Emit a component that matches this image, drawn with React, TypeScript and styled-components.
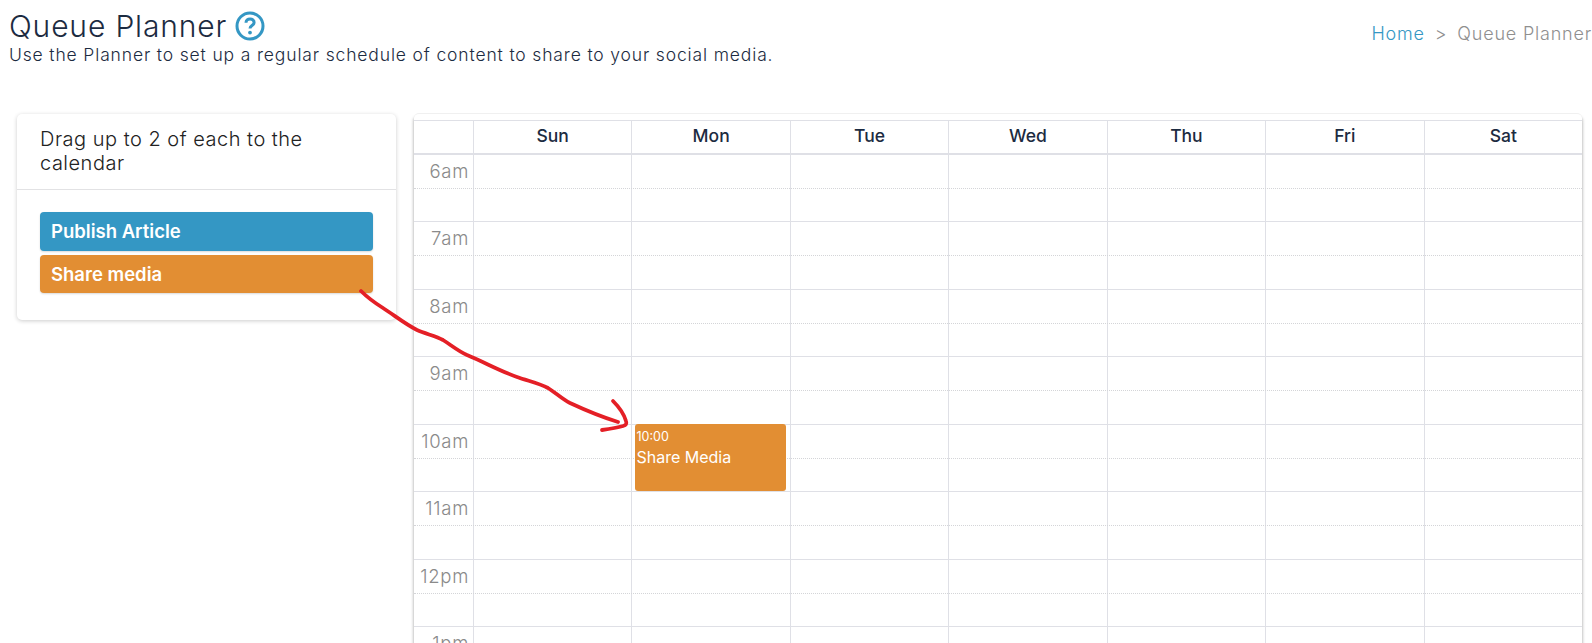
import React from "react";
import styled, { createGlobalStyle } from "styled-components";

const GlobalStyle = createGlobalStyle`
	html, body {
		margin: 0;
		height: 100%;
		background: #fff;
		overflow: hidden;
	}
	body {
		font-family: Inter, "Open Sans", sans-serif;
		color: #1c2b41;
	}
`;

const Page = styled.div`
	position: relative;
	width: 1592px;
	height: 643px;
	overflow: hidden;
`;

const Header = styled.header`
	display: flex;
	justify-content: space-between;
	align-items: flex-start;
	height: 113px;
	padding: 10px 0 0 9px;
	box-sizing: border-box;
`;

const TitleRow = styled.div`
	display: flex;
	align-items: center;
	gap: 8px;
	height: 32px;
`;

const Title = styled.h1`
	margin: 0;
	font-size: 30px;
	font-weight: 300;
	line-height: 32px;
	letter-spacing: 0.85px;
	color: #1c2b41;
`;

const Subtitle = styled.p`
	margin: 1px 0 0;
	font-size: 17.5px;
	font-weight: 300;
	line-height: 24px;
	letter-spacing: 0.85px;
	color: #1c2b41;
`;

const Breadcrumb = styled.nav`
	display: flex;
	gap: 10px;
	margin-top: 12px;
	font-size: 18px;
	font-weight: 300;
	line-height: 24px;
	letter-spacing: 0.8px;
	white-space: nowrap;
	color: #8f8f8f;
`;

const Crumb = styled.a`
	color: #3497c4;
`;

const Main = styled.div`
	display: flex;
	align-items: flex-start;
	gap: 18px;
	padding-left: 17px;
`;

const SideCard = styled.aside`
	width: 379px;
	box-sizing: border-box;
	background: #fff;
	border-radius: 5px;
	box-shadow: 0 1px 4px rgba(0, 0, 0, 0.2);
	margin-top: 1px;
`;

const SideHeading = styled.div`
	height: 76px;
	box-sizing: border-box;
	padding: 13px 60px 0 23px;
	border-bottom: 1px solid #e2e2e4;
	font-size: 20px;
	font-weight: 300;
	line-height: 24.4px;
	letter-spacing: 0.5px;
	color: #222;
`;

const SideBody = styled.div`
	display: flex;
	flex-direction: column;
	gap: 4px;
	padding: 22px 23px 27px;
`;

const DragItem = styled.div<{ $color: string }>`
	height: 38.5px;
	box-sizing: border-box;
	padding: 0 11px;
	display: flex;
	align-items: center;
	background: ${(p) => p.$color};
	border-radius: 4px;
	box-shadow: 0 1px 2px rgba(0, 0, 0, 0.15);
	color: #fff;
	font-size: 18.5px;
	font-weight: 600;
`;

const Calendar = styled.section`
	width: 1168px;
	height: 600px;
	box-sizing: border-box;
	padding-top: 6px;
	border-radius: 5px 5px 0 0;
	border-top: 1px solid #f0f0f0;
	box-shadow: -1px 3px 3px rgba(0, 0, 0, 0.2), 1px 3px 3px rgba(0, 0, 0, 0.2);
	overflow: hidden;
	background: #fff;
`;

const columns = "59px repeat(7, 1fr)";

const WeekHeader = styled.div`
	display: grid;
	grid-template-columns: ${columns};
	height: 34.5px;
	box-sizing: border-box;
	border-top: 1px solid #dfe0e6;
	border-bottom: 2px solid #dfe0e6;
`;

const DayName = styled.div`
	display: flex;
	align-items: center;
	justify-content: center;
	padding-bottom: 2px;
	border-left: 1px solid #dfe0e6;
	font-size: 17.5px;
	font-weight: 500;
	color: #1c2b41;
`;

const Corner = styled.div``;

const HourRow = styled.div`
	position: relative;
	display: grid;
	grid-template-columns: ${columns};
	height: 67.5px;
	box-sizing: border-box;
	border-bottom: 1px solid #dfe0e6;

	&::after {
		content: "";
		position: absolute;
		left: 0;
		right: 0;
		top: 33.4px;
		border-top: 1px dotted #d4d5d8;
	}
`;

const TimeLabel = styled.div`
	padding: 5px 4px 0 0;
	text-align: right;
	font-size: 18.5px;
	font-weight: 300;
	line-height: 22px;
	letter-spacing: 0.7px;
	color: #8a8a8a;
`;

const DayCell = styled.div`
	position: relative;
	border-left: 1px solid #dfe0e6;
`;

const EventCard = styled.div`
	position: absolute;
	z-index: 1;
	left: 3px;
	right: 4px;
	top: -0.5px;
	height: 67px;
	padding: 4px 1px;
	box-sizing: border-box;
	background: #e28e33;
	border-radius: 3px;
	color: #fff;
`;

const EventTime = styled.div`
	font-size: 12.5px;
	line-height: 18px;
`;

const EventTitle = styled.div`
	font-size: 16px;
	line-height: 23px;
`;

const ArrowOverlay = styled.svg`
	position: absolute;
	z-index: 2;
	inset: 0;
	pointer-events: none;
`;

const days = ["Sun", "Mon", "Tue", "Wed", "Thu", "Fri", "Sat"];
const hours = ["6am", "7am", "8am", "9am", "10am", "11am", "12pm", "1pm"];

const HelpIcon: React.FC = () => (
	<svg width="30" height="30" viewBox="0 0 30 30" fill="none">
		<circle cx="15" cy="15" r="13" stroke="#3497c4" strokeWidth="3" />
		<path
			d="M11 11.8c0-2.4 1.8-3.9 4.1-3.9s4 1.4 4 3.5c0 3.1-4.1 3-4.1 6"
			stroke="#3497c4"
			strokeWidth="3"
		/>
		<circle cx="15" cy="21.6" r="1.9" fill="#3497c4" />
	</svg>
);

const App: React.FC = () => {
	return (
		<Page>
			<GlobalStyle />
			<Header>
				<div>
					<TitleRow>
						<Title>Queue Planner</Title>
						<HelpIcon />
					</TitleRow>
					<Subtitle>
						Use the Planner to set up a regular schedule of content to share to
						your social media.
					</Subtitle>
				</div>
				<Breadcrumb>
					<Crumb>Home</Crumb>
					<span>&gt;</span>
					<span>Queue Planner</span>
				</Breadcrumb>
			</Header>
			<Main>
				<SideCard>
					<SideHeading>Drag up to 2 of each to the calendar</SideHeading>
					<SideBody>
						<DragItem $color="#3497c4">Publish Article</DragItem>
						<DragItem $color="#e28e33">Share media</DragItem>
					</SideBody>
				</SideCard>
				<Calendar>
					<WeekHeader>
						<Corner />
						{days.map((day) => (
							<DayName key={day}>{day}</DayName>
						))}
					</WeekHeader>
					{hours.map((hour) => (
						<HourRow key={hour}>
							<TimeLabel>{hour}</TimeLabel>
							{days.map((day) => (
								<DayCell key={day}>
									{hour === "10am" && day === "Mon" && (
										<EventCard>
											<EventTime>10:00</EventTime>
											<EventTitle>Share Media</EventTitle>
										</EventCard>
									)}
								</DayCell>
							))}
						</HourRow>
					))}
				</Calendar>
			</Main>
			<ArrowOverlay width="1592" height="643" viewBox="0 0 1592 643" fill="none">
				<path
					d="M361 291C368 298 375 303 383 308C394 315 405 324 417 330C426 334 436 336 443 340C451 345 458 351 467 355C484 362 500 371 517 377C528 381 539 383 548 388C556 393 562 399 570 403C585 410 602 417 618 422"
					stroke="#e41f26"
					strokeWidth="3.8"
					strokeLinecap="round"
				/>
				<path
					d="M613 401C619 407 624 414 626 421C627 424 626 425 623 426C616 428 609 429 602 430"
					stroke="#e41f26"
					strokeWidth="3.8"
					strokeLinecap="round"
				/>
			</ArrowOverlay>
		</Page>
	);
};

export default App;
